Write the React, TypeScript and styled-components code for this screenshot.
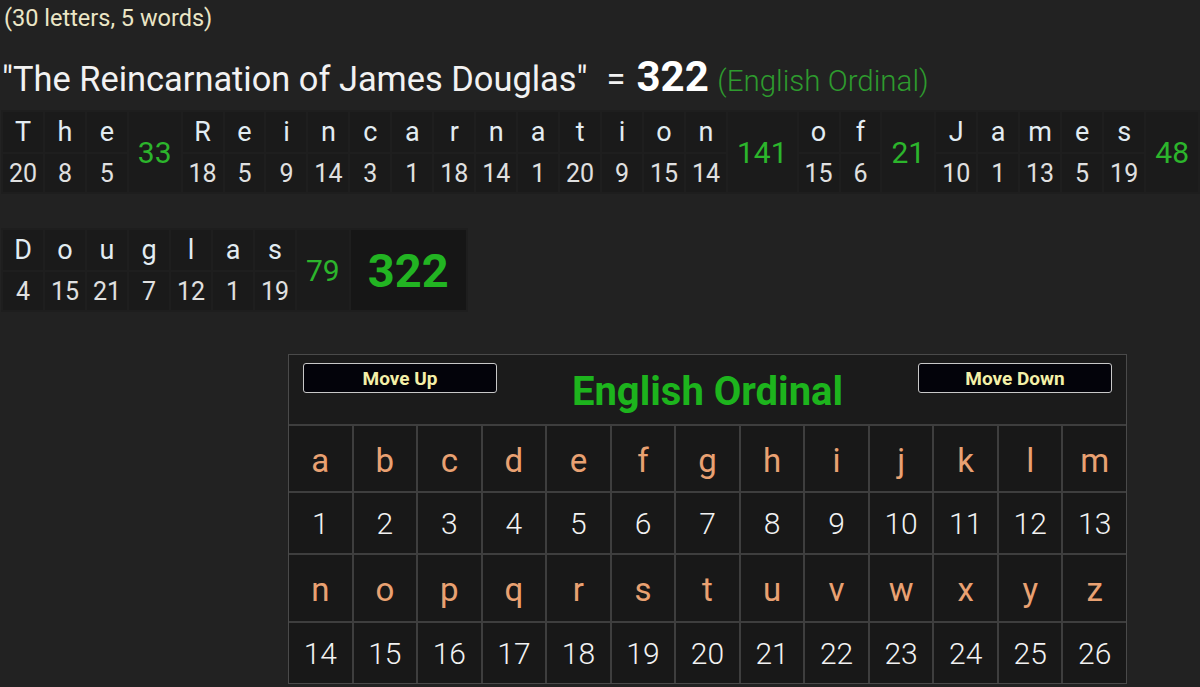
import React from "react";
import styled, { createGlobalStyle } from "styled-components";

const Global = createGlobalStyle`
  html, body { margin: 0; padding: 0; background: #222222; }
  body { font-family: Roboto, "Noto Sans", "Liberation Sans", sans-serif; color: #eee; overflow: hidden; }
`;

const Page = styled.div`
  width: 1200px;
  height: 687px;
  overflow: hidden;
  padding-left: 1px;
  box-sizing: border-box;
`;

const Count = styled.div`
  font-size: 23.5px;
  color: #ebe6c6;
  height: 36px;
  line-height: 36px;
  padding-left: 3px;
`;

const Phrase = styled.div`
  font-size: 34.4px;
  color: #f2f2f2;
  height: 74px;
  line-height: 82px;
  padding-left: 1px;
  white-space: nowrap;
`;

const Equals = styled.span`
  margin: 0 11px 0 19px;
`;

const Total = styled.span`
  font-weight: 700;
  font-size: 42px;
  color: #ffffff;
`;

const CipherTag = styled.span`
  font-weight: 300;
  font-size: 29.5px;
  color: #2e9b2e;
`;

const Breakdown = styled.table<{ $mt: number }>`
  border-collapse: separate;
  border-spacing: 2px;
  background: #1e1e1e;
  margin-top: ${(p) => p.$mt}px;
  white-space: nowrap;
`;

const LetterCell = styled.td`
  width: 40px;
  height: 40px;
  padding: 0;
  text-align: center;
  background: #1a1a1a;
  color: #e2ecf2;
  font-size: 27px;
`;

const NumCell = styled.td`
  width: 40px;
  height: 38px;
  padding: 0;
  text-align: center;
  background: #1a1a1a;
  color: #e0e0e0;
  font-size: 25px;
`;

const SumCell = styled.td`
  padding: 0 9px;
  text-align: center;
  background: #1b1b1b;
  color: #2cb52c;
  font-size: 30px;
`;

const GrandCell = styled.td`
  padding: 0 17px;
  text-align: center;
  background: #161616;
  color: #22b422;
  font-size: 47px;
  font-weight: 700;
`;

const Panel = styled.div`
  margin: 42px 0 0 287px;
  width: 837px;
  border: 1px solid #4a4a4a;
  background: #1b1b1b;
`;

const PanelHeader = styled.div`
  height: 71px;
  display: grid;
  grid-template-columns: 194px 1fr 194px;
  align-items: start;
  padding: 8px 14px 0 14px;
  box-sizing: border-box;
  border-bottom: 2px solid #3e3e3e;
`;

const MoveButton = styled.button`
  height: 30px;
  width: 194px;
  background: #03030a;
  border: 1px solid #c8c8c8;
  border-radius: 3px;
  color: #f4f0a8;
  font-family: Roboto, "Liberation Sans", sans-serif;
  font-weight: 700;
  font-size: 19px;
  padding: 0;
`;

const CipherTitle = styled.div`
  text-align: center;
  color: #1db41d;
  font-weight: 700;
  font-size: 40px;
  line-height: 57px;
`;

const Grid = styled.div`
  display: grid;
  grid-template-columns: repeat(13, 1fr);
  grid-template-rows: 65px 60px 66px 60px;
  gap: 2px;
  background: #3e3e3e;
`;

const GridCell = styled.div<{ $letter?: boolean }>`
  background: #181818;
  display: flex;
  align-items: center;
  justify-content: center;
  padding-top: ${(p) => (p.$letter ? "3px" : "1px")};
  font-size: ${(p) => (p.$letter ? "33px" : "30px")};
  font-weight: ${(p) => (p.$letter ? 400 : 300)};
  color: ${(p) => (p.$letter ? "#e9a172" : "#f2f2f2")};
`;

const words = ["The", "Reincarnation", "of", "James"];
const val = (c: string) => c.toLowerCase().charCodeAt(0) - 96;
const wsum = (w: string) => w.split("").reduce((a, c) => a + val(c), 0);

function WordTable({ ws, mt, grand }: { ws: string[]; mt: number; grand?: number }) {
  return (
    <Breakdown $mt={mt}>
      <tbody>
        <tr>
          {ws.map((w, i) => (
            <React.Fragment key={i}>
              {w.split("").map((c, j) => (
                <LetterCell key={j}>{c}</LetterCell>
              ))}
              <SumCell rowSpan={2}>{wsum(w)}</SumCell>
            </React.Fragment>
          ))}
          {grand !== undefined && <GrandCell rowSpan={2}>{grand}</GrandCell>}
        </tr>
        <tr>
          {ws.map((w, i) => (
            <React.Fragment key={i}>
              {w.split("").map((c, j) => (
                <NumCell key={j}>{val(c)}</NumCell>
              ))}
            </React.Fragment>
          ))}
        </tr>
      </tbody>
    </Breakdown>
  );
}

export default function App() {
  const alpha = "abcdefghijklmnopqrstuvwxyz".split("");
  const rows = [alpha.slice(0, 13), alpha.slice(13)];
  return (
    <Page>
      <Global />
      <Count>(30 letters, 5 words)</Count>
      <Phrase>
        "The Reincarnation of James Douglas"<Equals>=</Equals>
        <Total>322</Total> <CipherTag>(English Ordinal)</CipherTag>
      </Phrase>
      <WordTable ws={words} mt={0} />
      <WordTable ws={["Douglas"]} mt={34} grand={322} />
      <Panel>
        <PanelHeader>
          <MoveButton>Move Up</MoveButton>
          <CipherTitle>English Ordinal</CipherTitle>
          <MoveButton>Move Down</MoveButton>
        </PanelHeader>
        <Grid>
          {rows.map((r, ri) => (
            <React.Fragment key={ri}>
              {r.map((c) => (
                <GridCell key={c} $letter>
                  {c}
                </GridCell>
              ))}
              {r.map((c) => (
                <GridCell key={c + "n"}>{val(c)}</GridCell>
              ))}
            </React.Fragment>
          ))}
        </Grid>
      </Panel>
    </Page>
  );
}
